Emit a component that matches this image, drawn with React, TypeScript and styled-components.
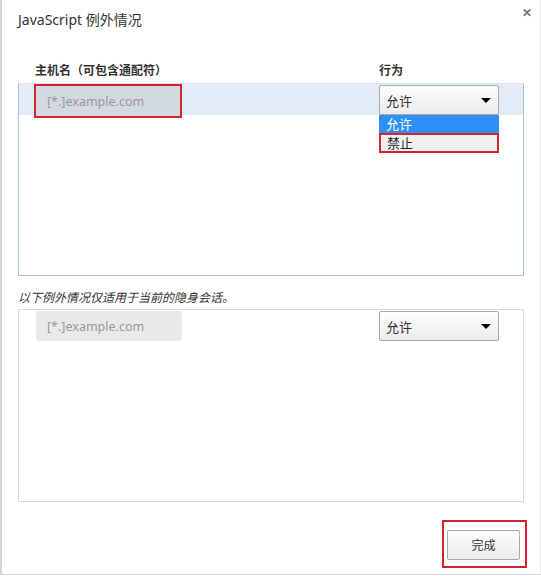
import styled, { createGlobalStyle } from "styled-components";

const GlobalStyle = createGlobalStyle`
	html, body {
		margin: 0;
		padding: 0;
		background: #fff;
	}

	body {
		font-family: "Noto Sans", "Noto Sans CJK SC", sans-serif;
		color: #333;
	}
`;

const Dialog = styled.div`
	box-sizing: border-box;
	width: 541px;
	height: 575px;
	display: flex;
	flex-direction: column;
	padding: 11px 13px 6px 18px;
	border-left: 2px solid #d6d6d6;
	border-right: 1px solid #e6e6e6;
	border-bottom: 1px solid #d6d6d6;
	background: #fff;
`;

const Header = styled.div`
	display: flex;
	justify-content: space-between;
	align-items: flex-start;
	height: 18px;
`;

const Title = styled.h1`
	margin: 0 0 0 -2px;
	font-size: 14px;
	font-weight: normal;
	line-height: 18px;
	color: #333;
`;

const CloseButton = styled.span`
	margin: -6px -5px 0 0;
	font-size: 12px;
	font-weight: bold;
	line-height: 16px;
	color: #777;
	cursor: pointer;
`;

const Content = styled.div`
	display: flex;
	flex-direction: column;
	width: 506px;
	margin-left: -2px;
`;

const ColumnHeaders = styled.div`
	display: grid;
	grid-template-columns: 344px 120px;
	padding-left: 17px;
	margin-top: 34px;
	margin-bottom: 4px;
	font-size: 12px;
	font-weight: bold;
	line-height: 16px;
`;

const List = styled.div<{ focused?: boolean }>`
	box-sizing: border-box;
	height: 193px;
	border: 1px solid ${(p) => (p.focused ? "#a6c0e2" : "#dadada")};
	border-top-color: ${(p) => (p.focused ? "#d9e3f1" : "#dadada")};
	background: #fff;
`;

const Row = styled.div<{ selected?: boolean }>`
	display: grid;
	grid-template-columns: 345px 120px;
	align-items: start;
	height: 31px;
	padding-left: 15px;
	background: ${(p) => (p.selected ? "#e3ebf6" : "transparent")};
`;

const HostInput = styled.div<{ highlighted?: boolean }>`
	box-sizing: border-box;
	display: flex;
	align-items: center;
	font-size: 12.5px;
	color: #999;
	${(p) =>
		p.highlighted
			? `
		width: 148px;
		height: 34px;
		margin-top: 0;
		padding-left: 11px;
		border: 2px solid #d2232f;
		background: #d2d9e2;
	`
			: `
		width: 146px;
		height: 30px;
		margin: 1px 0 0 2px;
		padding-left: 11px;
		border-radius: 4px;
		background: #e9e9e9;
	`}
`;

const SelectWrap = styled.div`
	position: relative;
`;

const Select = styled.div`
	box-sizing: border-box;
	display: flex;
	align-items: center;
	justify-content: space-between;
	width: 120px;
	height: 30px;
	margin-top: 1px;
	padding: 0 7px 0 6px;
	border: 1px solid #a9a9a9;
	border-radius: 2px;
	background: linear-gradient(#fdfdfd, #ececec);
	font-size: 13px;
	color: #333;
`;

const Arrow = styled.span`
	width: 0;
	height: 0;
	border-left: 5px solid transparent;
	border-right: 5px solid transparent;
	border-top: 5px solid #000;
`;

const Options = styled.ul`
	position: absolute;
	top: 31px;
	left: 0;
	box-sizing: border-box;
	width: 120px;
	margin: 0;
	padding: 0;
	list-style: none;
	background: #fff;
	font-size: 13px;
`;

const Option = styled.li<{ active?: boolean; highlighted?: boolean }>`
	box-sizing: border-box;
	height: ${(p) => (p.highlighted ? "20px" : "18px")};
	padding-left: ${(p) => (p.highlighted ? "6px" : "7px")};
	color: ${(p) => (p.active ? "#fff" : "#222")};
	background: ${(p) => (p.active ? "#2e8ff5" : "#f0f0f0")};
	border: ${(p) => (p.highlighted ? "2px solid #d2232f" : "none")};
	line-height: ${(p) => (p.highlighted ? "16px" : "18px")};
`;

const Note = styled.p`
	margin: 14px 0 3px;
	font-size: 12px;
	font-style: italic;
	line-height: 16px;
	color: #333;
`;

const Footer = styled.div`
	display: flex;
	justify-content: flex-end;
	margin-top: auto;
`;

const Highlight = styled.div`
	padding: 8px 5px 6px 3px;
	border: 2px solid #d2232f;
`;

const Button = styled.button`
	box-sizing: border-box;
	width: 73px;
	height: 30px;
	border: 1px solid #a9a9a9;
	border-radius: 2px;
	background: linear-gradient(#fdfdfd, #ececec);
	font-family: "Noto Sans", "Noto Sans CJK SC", sans-serif;
	font-size: 12px;
	color: #333;
`;

const App = () => {
	return (
		<>
			<GlobalStyle />
			<Dialog>
				<Header>
					<Title>JavaScript 例外情况</Title>
					<CloseButton>✕</CloseButton>
				</Header>
				<Content>
					<ColumnHeaders>
						<span>主机名（可包含通配符）</span>
						<span>行为</span>
					</ColumnHeaders>
					<List focused>
						<Row selected>
							<HostInput highlighted>[*.]example.com</HostInput>
							<SelectWrap>
								<Select>
									<span>允许</span>
									<Arrow />
								</Select>
								<Options>
									<Option active>允许</Option>
									<Option highlighted>禁止</Option>
								</Options>
							</SelectWrap>
						</Row>
					</List>
					<Note>以下例外情况仅适用于当前的隐身会话。</Note>
					<List>
						<Row>
							<HostInput>[*.]example.com</HostInput>
							<SelectWrap>
								<Select>
									<span>允许</span>
									<Arrow />
								</Select>
							</SelectWrap>
						</Row>
					</List>
				</Content>
				<Footer>
					<Highlight>
						<Button>完成</Button>
					</Highlight>
				</Footer>
			</Dialog>
		</>
	);
};

export default App;
